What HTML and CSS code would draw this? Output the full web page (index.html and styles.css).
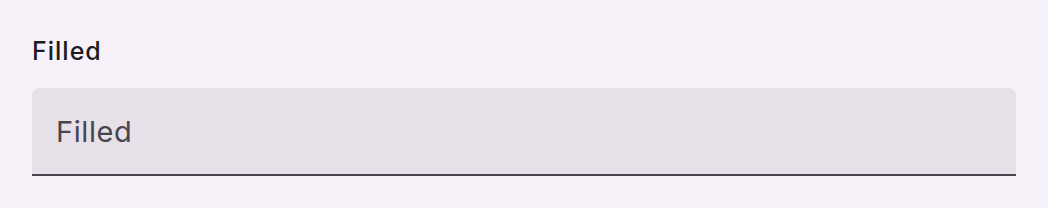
FILE: index.html
```html
<!DOCTYPE html>
<html lang="en">
<head>
    <meta charset="UTF-8">
    <title>Filled text field</title>
    <link rel="stylesheet" href="styles.css">
</head>
<body>
    <div class="container">
        <label class="field-label" for="filled">Filled</label>
        <div class="filled-field">
            <input type="text" id="filled" placeholder="Filled">
        </div>
    </div>
</body>
</html>
```

FILE: styles.css
```css
body {
    margin: 0;
    background-color: #f7f2fa;
    font-family: Inter, "Noto Sans", sans-serif;
}
.container {
    padding: 33px 32px 0 32px;
}
.field-label {
    display: block;
    font-size: 25px;
    line-height: 36px;
    font-weight: 500;
    letter-spacing: 1px;
    color: #1d1b20;
    margin-bottom: 19px;
}
.filled-field {
    background-color: #e6e0e9;
    border-radius: 8px 8px 0 0;
    border-bottom: 2px solid #49454f;
    height: 86px;
    display: flex;
    align-items: center;
}
.filled-field input {
    border: none;
    outline: none;
    background: transparent;
    font-family: inherit;
    font-size: 29px;
    letter-spacing: 0.6px;
    color: #1d1b20;
    padding: 0 24px;
    width: 100%;
}
.filled-field input::placeholder {
    color: #49454f;
}
```
